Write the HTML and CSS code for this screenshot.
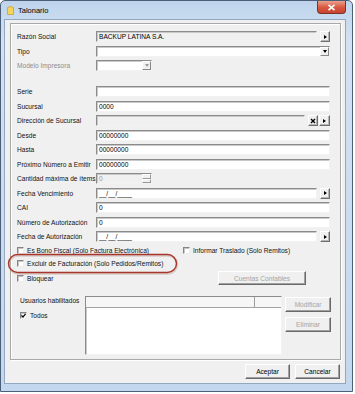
FILE: index.html
```html
<!DOCTYPE html>
<html>
<head>
<title>Talonario</title>
<link rel="stylesheet" href="styles.css">
</head>
<body>

<div class="window">
	<div class="titlebar">
		<svg class="app-icon" width="7" height="9" viewBox="0 0 7 9">
			<path d="M0.5 1.5 L4 0.5 L6.5 1.5 L6.5 8.5 L0.5 8.5 Z" fill="#f5d45a" stroke="#c9a233" stroke-width="0.8"/>
		</svg>
		<span class="title">Talonario</span>
		<div class="close">
			<svg width="9" height="7" viewBox="0 0 9 7"><path d="M1.5 0.8 L7.5 6.2 M7.5 0.8 L1.5 6.2" stroke="#fff" stroke-width="1.7"/></svg>
		</div>
	</div>

	<div class="client">
		<div class="group">
			<div class="form">
				<div class="row">
					<span class="lbl">Razón Social</span>
					<div class="field"><div class="box off">BACKUP LATINA S.A.</div><span class="sbtn"><i class="tri-r"></i></span></div>
				</div>
				<div class="row">
					<span class="lbl">Tipo</span>
					<div class="field"><div class="box combo"><span class="drop"><i class="tri-d"></i></span></div></div>
				</div>
				<div class="row">
					<span class="lbl dim">Modelo Impresora</span>
					<div class="field"><div class="box combo short"><span class="drop"><i class="tri-d dim"></i></span></div></div>
				</div>
				<div class="row spaced">
					<span class="lbl">Serie</span>
					<div class="field"><div class="box"></div></div>
				</div>
				<div class="row">
					<span class="lbl">Sucursal</span>
					<div class="field"><div class="box">0000</div></div>
				</div>
				<div class="row">
					<span class="lbl">Dirección de Sucursal</span>
					<div class="field">
						<div class="box off"></div>
						<span class="sbtn">
							<svg width="6" height="6" viewBox="0 0 6 6"><path d="M1 1 L5 5 M5 1 L1 5" stroke="#000" stroke-width="1.4"/></svg>
						</span>
						<span class="sbtn tight"><i class="tri-r"></i></span>
					</div>
				</div>
				<div class="row">
					<span class="lbl">Desde</span>
					<div class="field"><div class="box">00000000</div></div>
				</div>
				<div class="row">
					<span class="lbl">Hasta</span>
					<div class="field"><div class="box">00000000</div></div>
				</div>
				<div class="row">
					<span class="lbl">Próximo Número a Emitir</span>
					<div class="field"><div class="box">00000000</div></div>
				</div>
				<div class="row">
					<span class="lbl">Cantidad máxima de ítems</span>
					<div class="field">
						<div class="box off short spin"><span class="val">0</span>
							<span class="spin-btns"><span class="up"></span><span class="down"></span></span>
						</div>
					</div>
				</div>
				<div class="row">
					<span class="lbl">Fecha Vencimiento</span>
					<div class="field"><div class="box">__/__/____</div><span class="sbtn"><i class="tri-r"></i></span></div>
				</div>
				<div class="row">
					<span class="lbl">CAI</span>
					<div class="field"><div class="box">0</div></div>
				</div>
				<div class="row">
					<span class="lbl">Número de Autorización</span>
					<div class="field"><div class="box">0</div></div>
				</div>
				<div class="row">
					<span class="lbl">Fecha de Autorización</span>
					<div class="field"><div class="box">__/__/____</div><span class="sbtn"><i class="tri-r"></i></span></div>
				</div>
			</div>

			<div class="checks">
				<label class="chk"><span class="cb"></span>Es Bono Fiscal (Solo Factura Electrónica)</label>
				<label class="chk"><span class="cb"></span>Informar Traslado (Solo Remitos)</label>
				<label class="chk"><span class="cb"></span>Excluir de Facturación (Solo Pedidos/Remitos)</label>
				<span></span>
				<label class="chk"><span class="cb"></span>Bloquear</label>
				<div><span class="btn disabled wide">Cuentas Contables</span></div>
			</div>

			<div class="users">
				<div class="users-left">
					<span class="users-lbl">Usuarios habilitados</span>
					<label class="chk"><span class="cb on">
						<svg width="5" height="5" viewBox="0 0 5 5"><path d="M0.5 2.3 L2 4 L4.6 0.8" fill="none" stroke="#000" stroke-width="1.2"/></svg>
					</span>Todos</label>
				</div>
				<div class="listview">
					<div class="lv-head"><span class="col1"></span><span class="col2"></span></div>
				</div>
				<div class="users-btns">
					<span class="btn disabled">Modificar</span>
					<span class="btn disabled">Eliminar</span>
				</div>
			</div>
		</div>

		<div class="actions">
			<span class="btn">Aceptar</span>
			<span class="btn">Cancelar</span>
		</div>
	</div>

	<!-- red mark drawn over the screenshot -->
	<svg class="mark" width="173" height="23" viewBox="0 0 173 23">
		<rect x="2" y="2.5" width="168" height="18" rx="9" fill="none" stroke="#c9b3ad" stroke-width="2.5" opacity="0.6"/>
		<rect x="1.5" y="1.5" width="168" height="18" rx="9" fill="none" stroke="#a8372b" stroke-width="1.4"/>
	</svg>
</div>

</body>
</html>
```

FILE: styles.css
```css
html, body {
	margin: 0;
	padding: 0;
	background: #fff;
	font-family: "Liberation Sans", Arial, sans-serif;
}

.window {
	position: relative;
	width: 351px;
	height: 390px;
	border: 1px solid #4d5f77;
	border-radius: 5px 5px 0 0;
	background: linear-gradient(#bfd4ec, #d3e2f3 40px, #c3d7ee);
	display: flex;
	flex-direction: column;
}

.titlebar {
	height: 18px;
	display: flex;
	align-items: center;
	padding-left: 6px;
	position: relative;
}

.app-icon {
	margin-right: 4px;
}

.title {
	font-size: 7.5px;
	color: #000;
}

.close {
	position: absolute;
	right: 6px;
	top: 0;
	width: 27px;
	height: 12px;
	border: 1px solid #7a3328;
	border-top: none;
	border-radius: 0 0 4px 4px;
	background: linear-gradient(#eba08d, #d8573f 55%, #c9432f);
	display: flex;
	align-items: center;
	justify-content: center;
}

.client {
	flex: 1;
	margin: 0 6px 7px 3px;
	border: 1px solid #91a7c2;
	background: #f0f0f0;
	display: flex;
	flex-direction: column;
}

.group {
	margin: 3px 4px 0 5px;
	border: 1px solid #a9a9a9;
	box-shadow: inset 1px 1px #fff, 1px 1px #fff;
	box-sizing: border-box;
	height: 337px;
}

/* form rows */
.form {
	padding: 7px 9px 0 6px;
	display: flex;
	flex-direction: column;
	gap: 3.5px;
}

.row {
	display: grid;
	grid-template-columns: 79px 234px;
	height: 11px;
	align-items: center;
}

.row.spaced {
	margin-top: 11.5px;
}

.lbl {
	font-size: 6.6px;
	color: #111;
	white-space: nowrap;
}

.dim {
	color: #8d8d8d;
}

.field {
	display: flex;
	height: 11px;
	gap: 3px;
}

.box {
	flex: 1;
	box-sizing: border-box;
	height: 11px;
	background: #fff;
	border: 1px solid;
	border-color: #8b8b8b #f2f2f2 #f2f2f2 #8b8b8b;
	box-shadow: inset 1px 1px #c9c9c9;
	font-size: 6.6px;
	line-height: 9px;
	padding-left: 2px;
	color: #000;
	white-space: nowrap;
	position: relative;
}

.box.off {
	background: #f0f0f0;
}

.box.short {
	flex: none;
	width: 56px;
}

.combo .drop {
	position: absolute;
	right: 0;
	top: 0;
	width: 9px;
	height: 9px;
	box-sizing: border-box;
	background: #f0f0f0;
	border: 1px solid;
	border-color: #fff #888 #888 #fff;
	display: flex;
	align-items: center;
	justify-content: center;
}

.spin .val {
	color: #9a9a9a;
}

.spin-btns {
	position: absolute;
	right: 0;
	top: 0;
	width: 9px;
	height: 9px;
	display: flex;
	flex-direction: column;
}

.spin-btns span {
	flex: 1;
	border: 1px solid;
	border-color: #fff #999 #999 #fff;
	background: #f0f0f0;
}

.sbtn {
	width: 10px;
	height: 11px;
	box-sizing: border-box;
	background: #f0f0f0;
	border: 1px solid;
	border-color: #fff #6f6f6f #6f6f6f #fff;
	box-shadow: inset -1px -1px #b5b5b5;
	display: flex;
	align-items: center;
	justify-content: center;
}

.sbtn.tight {
	margin-left: -2px;
	width: 11px;
}

.tri-r {
	width: 0;
	height: 0;
	border-left: 3px solid #000;
	border-top: 2.5px solid transparent;
	border-bottom: 2.5px solid transparent;
}

.tri-d {
	width: 0;
	height: 0;
	border-top: 3px solid #000;
	border-left: 2.5px solid transparent;
	border-right: 2.5px solid transparent;
}

.tri-d.dim {
	border-top-color: #9a9a9a;
}

/* checkboxes */
.checks {
	display: grid;
	grid-template-columns: 166px 1fr;
	grid-template-rows: 9px 9px 14px;
	row-gap: 4px;
	padding: 4px 0 0 6px;
	align-items: center;
}

.checks > :nth-child(5), .checks > :nth-child(6) {
	margin-top: -2px;
}

.chk {
	display: flex;
	align-items: center;
	font-size: 6.6px;
	color: #111;
	white-space: nowrap;
}

.cb {
	width: 7px;
	height: 7px;
	box-sizing: border-box;
	background: #fff;
	border: 1px solid;
	border-color: #858585 #eee #eee #858585;
	box-shadow: inset 1px 1px #c4c4c4;
	margin-right: 3px;
	display: flex;
	align-items: center;
	justify-content: center;
}

.btn {
	box-sizing: border-box;
	height: 15px;
	width: 45px;
	background: #f0f0f0;
	border: 1px solid;
	border-color: #fff #696969 #696969 #fff;
	box-shadow: inset -1px -1px #a0a0a0;
	font-size: 6.6px;
	color: #000;
	display: flex;
	align-items: center;
	justify-content: center;
}

.btn.disabled {
	color: #a3a3a3;
}

.btn.wide {
	width: 88px;
	height: 14px;
	margin-left: 35px;
}

/* users */
.users {
	display: flex;
	padding: 10px 0 0 9px;
}

.users-left {
	width: 65px;
	display: flex;
	flex-direction: column;
	gap: 6px;
}

.users-lbl {
	font-size: 6.6px;
	color: #111;
	line-height: 10px;
	white-space: nowrap;
}

.listview {
	width: 197px;
	height: 59px;
	box-sizing: border-box;
	background: #fff;
	border: 1px solid;
	border-color: #8b8b8b #f2f2f2 #f2f2f2 #8b8b8b;
	box-shadow: inset 1px 1px #c9c9c9;
}

.lv-head {
	display: flex;
	height: 10px;
	border-bottom: 1px solid #a3a3a3;
	background: #f6f6f6;
}

.lv-head .col1 {
	width: 168px;
	border-right: 1px solid #9e9e9e;
}

.users-btns {
	margin-left: 3px;
	display: flex;
	flex-direction: column;
	gap: 5px;
	padding-top: 1px;
}

.users-btns .btn {
	width: 46px;
}

/* bottom buttons */
.actions {
	display: flex;
	justify-content: flex-end;
	gap: 5px;
	padding: 4px 5px 0 0;
}

.mark {
	position: absolute;
	left: 6px;
	top: 252px;
}
```
